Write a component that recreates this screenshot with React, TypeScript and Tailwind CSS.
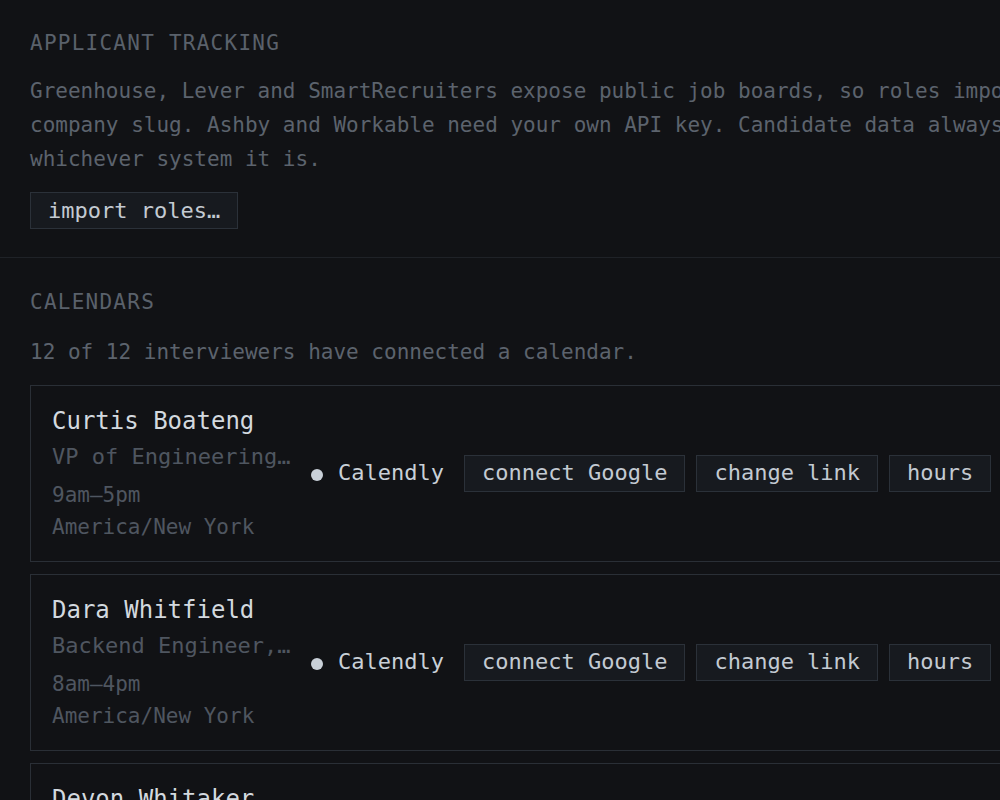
import React from "react";

type Person = { name: string; role: string; hours: string; tz: string };

const people: Person[] = [
  { name: "Curtis Boateng", role: "VP of Engineering, Platform", hours: "9am–5pm", tz: "America/New York" },
  { name: "Dara Whitfield", role: "Backend Engineer, Payments", hours: "8am–4pm", tz: "America/New York" },
  { name: "Devon Whitaker", role: "Staff Engineer, Infrastructure", hours: "10am–6pm", tz: "America/Chicago" },
];

function Btn({ children }: { children: React.ReactNode }) {
  return (
    <button className="h-[37px] px-[17px] flex items-center border border-[#2b3139] bg-[#171a1f] text-[#c3cad2] text-[22px] leading-[30px] whitespace-nowrap">
      {children}
    </button>
  );
}

function Card({ p }: { p: Person }) {
  return (
    <div className="border border-[#2a2f36] pl-[21px] pt-[20px] pb-[18px] flex items-center w-[1240px]">
      <div className="w-[240px] shrink-0">
        <div className="text-[24px] leading-[30px] text-[#d3d9df] whitespace-nowrap">{p.name}</div>
        <div className="mt-[6px] text-[22px] leading-[30px] text-[#4f5660] whitespace-nowrap overflow-hidden text-ellipsis">
          {p.role}
        </div>
        <div className="mt-[7px] text-[21px] leading-[32px] text-[#4f5660]">{p.hours}</div>
        <div className="text-[21px] leading-[32px] text-[#4f5660] whitespace-nowrap">{p.tz}</div>
      </div>
      <div className="ml-[19px] flex items-center gap-[15px] -mt-[3px]">
        <span className="w-[12px] h-[12px] rounded-full bg-[#c9d0d8] mt-[3px]" />
        <span className="text-[22px] leading-[30px] text-[#c9d0d7]">Calendly</span>
      </div>
      <div className="ml-[20px] flex items-center gap-[11px] -mt-[3px]">
        <Btn>connect Google</Btn>
        <Btn>change link</Btn>
        <Btn>hours</Btn>
        <Btn>disconnect</Btn>
      </div>
    </div>
  );
}

export default function App() {
  return (
    <div
      className="w-[1000px] h-[800px] overflow-hidden bg-[#111215]"
      style={{ fontFamily: '"DejaVu Sans Mono", "Liberation Mono", monospace' }}
    >
      <div className="w-[1300px]">
        <section className="px-[30px] pt-[28px] pb-[28px] border-b border-[#1f2227]">
          <h2 className="text-[21px] leading-[30px] tracking-[1.25px] text-[#5a616b] uppercase">Applicant tracking</h2>
          <p className="mt-[16px] w-[1180px] text-[21px] leading-[34px] text-[#5c636d]">
            Greenhouse, Lever and SmartRecruiters expose public job boards, so roles import with just a company slug. Ashby
            and Workable need your own API key. Candidate data always stays in whichever system it is.
          </p>
          <div className="mt-[16px] flex">
            <Btn>import roles…</Btn>
          </div>
        </section>
        <section className="px-[30px] pt-[29px]">
          <h2 className="text-[21px] leading-[30px] tracking-[1.25px] text-[#5a616b] uppercase">Calendars</h2>
          <p className="mt-[18px] text-[21px] leading-[34px] text-[#5c636d]">
            12 of 12 interviewers have connected a calendar.
          </p>
          <div className="mt-[16px] flex flex-col gap-[12px]">
            {people.map((p) => (
              <Card key={p.name} p={p} />
            ))}
          </div>
        </section>
      </div>
    </div>
  );
}
